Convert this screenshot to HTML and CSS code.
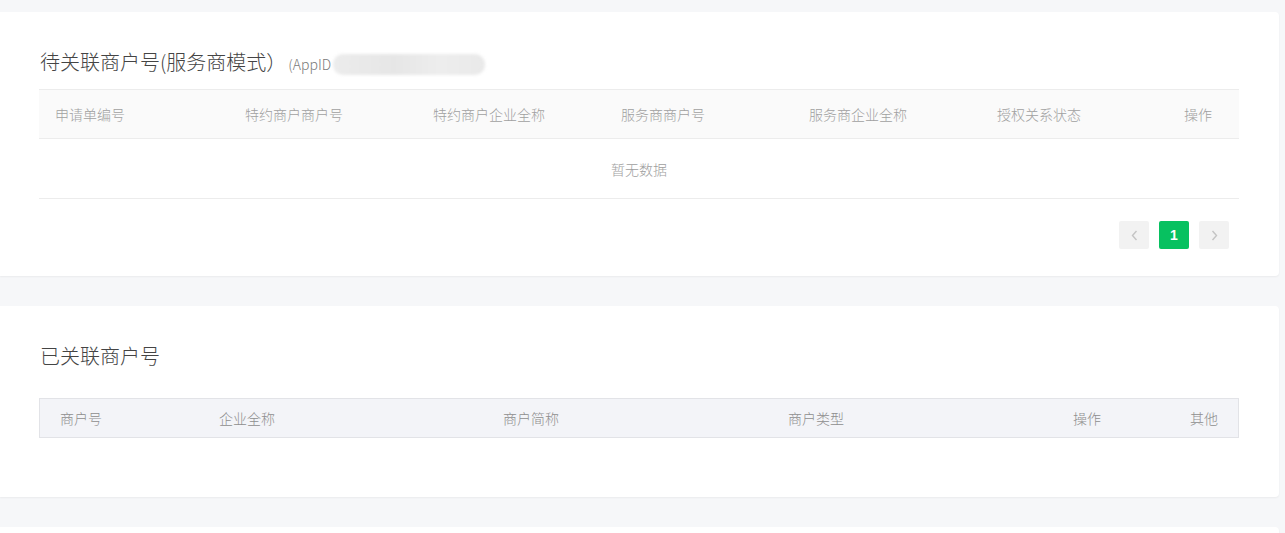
FILE: index.html
```html
<!DOCTYPE html>
<html lang="zh-CN">
<head>
<meta charset="utf-8">
<title>商户号</title>
<link rel="stylesheet" href="styles.css">
</head>
<body>
<div class="page">
  <section class="card card-pending">
    <div class="card-title">
      <span class="title-main">待关联商户号(服务商模式）</span>
      <span class="title-sub">(AppID</span>
      <span class="masked"></span>
    </div>
    <div class="table-pending">
      <div class="thead">
        <div class="th">申请单编号</div>
        <div class="th">特约商户商户号</div>
        <div class="th">特约商户企业全称</div>
        <div class="th">服务商商户号</div>
        <div class="th">服务商企业全称</div>
        <div class="th">授权关系状态</div>
        <div class="th th-last">操作</div>
      </div>
      <div class="empty">暂无数据</div>
    </div>
    <div class="pager">
      <button class="pg pg-arrow" type="button" aria-label="上一页">
        <svg width="7" height="11" viewBox="0 0 7 11"><path d="M5.5 1 L1.5 5.5 L5.5 10" fill="none" stroke="#c4c4c4" stroke-width="1.4"/></svg>
      </button>
      <button class="pg pg-current" type="button">1</button>
      <button class="pg pg-arrow" type="button" aria-label="下一页">
        <svg width="7" height="11" viewBox="0 0 7 11"><path d="M1.5 1 L5.5 5.5 L1.5 10" fill="none" stroke="#c4c4c4" stroke-width="1.4"/></svg>
      </button>
    </div>
  </section>

  <section class="card card-linked">
    <div class="card-title">
      <span class="title-main">已关联商户号</span>
    </div>
    <div class="table-linked">
      <div class="th2">商户号</div>
      <div class="th2">企业全称</div>
      <div class="th2">商户简称</div>
      <div class="th2">商户类型</div>
      <div class="th2">操作</div>
      <div class="th2 th2-last">其他</div>
    </div>
  </section>

  <section class="card card-next"></section>
</div>
</body>
</html>
```

FILE: styles.css
```css
* { box-sizing: border-box; }

html, body {
  margin: 0;
  padding: 0;
  background: #f6f7f9;
  font-family: "Noto Sans CJK SC", "Noto Sans", "Liberation Sans", sans-serif;
  color: #353535;
}

.page {
  padding: 12px 6px 0 0;
  height: 533px;
  overflow: hidden;
}

.card {
  background: #ffffff;
  border-radius: 0 4px 4px 0;
  box-shadow: 0 1px 2px rgba(0, 0, 0, 0.05);
  margin-bottom: 30px;
}

.card-pending {
  padding: 36px 40px 27px 39px;
}

.card-linked {
  padding: 36px 40px 59px 39px;
}

.card-next {
  height: 40px;
  margin-bottom: 0;
}

.card-title {
  display: flex;
  align-items: center;
  height: 28px;
  padding-left: 1px;
}

.title-main {
  font-size: 20px;
  font-weight: 300;
  line-height: 28px;
  color: #444444;
}

.title-sub {
  font-size: 14px;
  font-weight: 300;
  color: #7a7a7a;
  margin-left: 2px;
  margin-top: 3px;
}

.masked {
  display: inline-block;
  width: 152px;
  height: 21px;
  margin-left: 2px;
  margin-top: 4px;
  border-radius: 10px;
  background: linear-gradient(90deg, #ececec 0%, #e6e6e6 40%, #ededed 70%, #e9e9e9 100%);
  filter: blur(1.5px);
}

.card-pending .card-title { margin-bottom: 13px; }
.card-linked .card-title { margin-bottom: 28px; }

.table-pending {
  border-top: 1px solid #ececec;
}

.thead {
  display: grid;
  grid-template-columns: 190px 188px 188px 188px 188px 188px 1fr;
  height: 49px;
  align-items: center;
  background: #fafafa;
  border-bottom: 1px solid #ececec;
}

.th {
  font-size: 14px;
  font-weight: 300;
  color: #a0a0a0;
  padding-left: 16px;
  white-space: nowrap;
}

.th-last {
  padding-left: 0;
  text-align: right;
  padding-right: 27px;
}

.empty {
  height: 60px;
  display: flex;
  align-items: center;
  justify-content: center;
  font-size: 14px;
  font-weight: 300;
  color: #9e9e9e;
  border-bottom: 1px solid #ececec;
}

.pager {
  display: flex;
  justify-content: flex-end;
  gap: 10px;
  margin-top: 22px;
  padding-right: 10px;
}

.pg {
  width: 30px;
  height: 28px;
  border: 0;
  border-radius: 2px;
  padding: 0;
  display: flex;
  align-items: center;
  justify-content: center;
  font-family: "Liberation Sans", "Noto Sans", sans-serif;
  cursor: pointer;
}

.pg-arrow {
  background: #f2f2f2;
}

.pg-current {
  background: #07c160;
  color: #ffffff;
  font-size: 14px;
  font-weight: bold;
}

.table-linked {
  display: grid;
  grid-template-columns: 159px 284px 285px 285px 1fr auto;
  align-items: center;
  height: 40px;
  background: #f3f4f8;
  border: 1px solid #e2e3e7;
}

.th2 {
  font-size: 14px;
  font-weight: 300;
  color: #8e8e8e;
  padding-left: 20px;
  white-space: nowrap;
}

.th2-last {
  padding-left: 0;
  padding-right: 20px;
}
```
